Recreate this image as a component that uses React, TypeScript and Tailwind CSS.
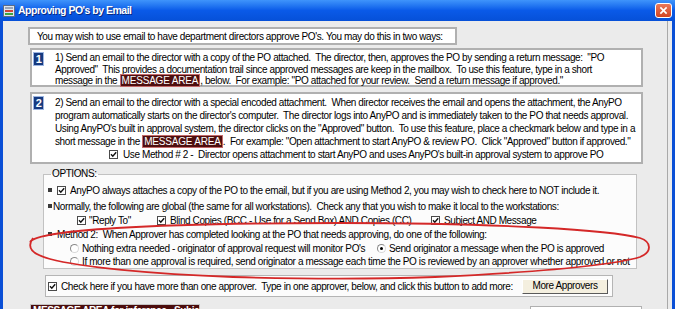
import type { ReactNode } from 'react';

function Check({ checked = true }: { checked?: boolean }) {
  return (
    <span className="inline-flex w-[9px] h-[9px] shrink-0 items-center justify-center bg-white border border-[#4a4a4a]">
      {checked && (
        <svg viewBox="0 0 7 7" className="w-[7px] h-[7px]">
          <path d="M1 3.2 L2.8 5.2 L6.2 1.2" fill="none" stroke="#111" strokeWidth="1.4" />
        </svg>
      )}
    </span>
  );
}

function Radio({ on = false }: { on?: boolean }) {
  return (
    <span className="inline-flex w-[9px] h-[9px] shrink-0 items-center justify-center rounded-full bg-white border border-t-[#8a8a8a] border-l-[#8a8a8a] border-r-[#d8d8d8] border-b-[#d8d8d8]">
      {on && <span className="w-[3px] h-[3px] rounded-full bg-black" />}
    </span>
  );
}

function Bullet() {
  return <span className="w-[4px] h-[4px] shrink-0 bg-[#3a3a3a]" />;
}

function MsgArea() {
  return (
    <span className="bg-[#4e0f0f] text-white border border-[#c46a6a] px-[1px] tracking-[-0.2px]">MESSAGE AREA</span>
  );
}

function Badge({ n }: { n: string }) {
  return (
    <span className="w-[11px] h-[14px] shrink-0 flex items-center justify-center bg-[#163a80] border border-[#9db6e2] text-white font-bold text-[11px] leading-none">
      {n}
    </span>
  );
}

function Row({ children, className = '' }: { children: ReactNode; className?: string }) {
  return <div className={`flex items-center h-[14px] whitespace-nowrap ${className}`}>{children}</div>;
}

export default function App() {
  return (
    <div className="w-[675px] h-[309px] overflow-hidden relative flex flex-col bg-[#0a4fd6] font-['Liberation_Sans',Arial,sans-serif] text-[10px] tracking-[-0.4px] text-black">
      {/* title bar */}
      <div className="h-[21px] shrink-0 flex items-center bg-linear-to-b from-[#3f94fb] via-[#0a5ae8] to-[#0650d8]">
        <svg viewBox="0 0 12 12" className="ml-[3px] w-[12px] h-[12px]">
          <rect x="0.5" y="0.5" width="11" height="11" fill="#dfe6ee" stroke="#5c6d88" />
          <rect x="2" y="2" width="8" height="2" fill="#9aa6b8" />
          <rect x="2" y="5" width="8" height="2" fill="#d0463a" />
          <rect x="2" y="8" width="8" height="2" fill="#3fa640" />
        </svg>
        <span className="ml-[3px] text-white font-bold text-[10.5px] tracking-[-0.5px] [text-shadow:1px_1px_0_#0a2a80]">
          Approving PO's by Email
        </span>
        <div className="ml-auto mr-[3px] w-[17px] h-[15px] rounded-[3px] border border-white bg-linear-to-b from-[#e9785a] to-[#d2431f] flex items-center justify-center">
          <svg viewBox="0 0 10 10" className="w-[9px] h-[9px]">
            <path d="M1.5 1.5 L8.5 8.5 M8.5 1.5 L1.5 8.5" stroke="#fff" strokeWidth="1.8" />
          </svg>
        </div>
      </div>

      {/* body */}
      <div className="flex-1 mx-[3px] flex bg-[#ebebeb]">
        <div className="flex-1 border-r border-[#a9a9a9] pl-[25px] pt-[6px] flex flex-col">
          {/* intro */}
          <div className="w-[429px] h-[18px] bg-white border-2 border-[#b0b0b0] flex items-center pl-[7px] whitespace-nowrap">
            You may wish to use email to have department directors approve PO's. You may do this in two ways:
          </div>

          {/* method 1 */}
          <div className="ml-[2px] mt-[3px] w-[613px] h-[39px] bg-white border-2 border-[#b0b0b0] flex pt-[2px] pl-[1px]">
            <Badge n="1" />
            <div className="ml-[11px] leading-[11.5px] whitespace-nowrap">
              1) Send an email to the director with a copy of the PO attached.&nbsp; The director, then, approves the PO by sending a return message:&nbsp; "PO
              <br />
              Approved"&nbsp; This provides a documentation trail since approved messages are keep in the mailbox.&nbsp; To use this feature, type in a short
              <br />
              message in the <MsgArea />, below.&nbsp; For example: "PO attached for your review.&nbsp; Send a return message if approved."
            </div>
          </div>

          {/* method 2 */}
          <div className="ml-[2px] mt-[5px] w-[613px] h-[72px] bg-white border-2 border-[#b0b0b0] flex pt-[2px] pl-[1px]">
            <Badge n="2" />
            <div className="ml-[11px] leading-[13px] whitespace-nowrap">
              2) Send an email to the director with a special encoded attachment.&nbsp; When director receives the email and opens the attachment, the AnyPO
              <br />
              program automatically starts on the director's computer.&nbsp; The director logs into AnyPO and is immediately taken to the PO that needs approval.
              <br />
              Using AnyPO's built in approval system, the director clicks on the "Approved" button.&nbsp; To use this feature, place a checkmark below and type in a
              <br />
              short message in the <MsgArea />.&nbsp; For example: "Open attachment to start AnyPO &amp; review PO.&nbsp; Click "Approved" button if approved."
              <div className="flex items-center h-[13px] ml-[54px]">
                <Check />
                <span className="ml-[5px]">Use Method # 2 -&nbsp; Director opens attachment to start AnyPO and uses AnyPO's built-in approval system to approve PO</span>
              </div>
            </div>
          </div>

          {/* options */}
          <fieldset className="ml-[15px] mt-[4px] w-[594px] h-[101px] bg-[#fcfcfc] border border-[#c2c2c2] pl-[4px]">
            <legend className="ml-[3px] px-[1px] leading-[12px]">OPTIONS:</legend>
            <Row className="mt-[3px]">
              <Bullet />
              <span className="ml-[5px]"><Check /></span>
              <span className="ml-[4px]">AnyPO always attaches a copy of the PO to the email, but if you are using Method 2, you may wish to check here to NOT include it.</span>
            </Row>
            <Row className="mt-[2px]">
              <Bullet />
              <span className="ml-[1px]">Normally, the following are global (the same for all workstations).&nbsp; Check any that you wish to make it local to the workstations:</span>
            </Row>
            <Row>
              <div className="ml-[29px] w-[80px] flex items-center">
                <Check />
                <span className="ml-[3px]">"Reply To"</span>
              </div>
              <div className="w-[274px] flex items-center">
                <Check />
                <span className="ml-[4px]">Blind Copies (BCC - Use for a Send Box) AND Copies (CC)</span>
              </div>
              <Check />
              <span className="ml-[4px]">Subject AND Message</span>
            </Row>
            <Row>
              <Bullet />
              <span className="ml-[5px]">Method 2:&nbsp; When Approver has completed looking at the PO that needs approving, do one of the following:</span>
            </Row>
            <Row>
              <div className="ml-[22px] w-[307px] flex items-center">
                <Radio />
                <span className="ml-[3px]">Nothing extra needed - originator of approval request will monitor PO's</span>
              </div>
              <Radio on />
              <span className="ml-[3px]">Send originator a message when the PO is approved</span>
            </Row>
            <Row className="-mt-[1px]">
              <div className="ml-[22px] flex items-center">
                <Radio />
                <span className="ml-[3px]">If more than one approval is required, send originator a message each time the PO is reviewed by an approver whether approved or not</span>
              </div>
            </Row>
          </fieldset>

          {/* more approvers */}
          <div className="ml-[17px] mt-[6px] w-[568px] h-[22px] bg-[#fcfcfc] border border-[#b5b5b5] flex items-center pl-[2px] whitespace-nowrap">
            <Check />
            <span className="ml-[4px]">Check here if you have more than one approver.&nbsp; Type in one approver, below, and click this button to add more:</span>
            <button className="ml-auto mr-[4px] w-[86px] h-[15px] bg-[#f4efdf] border border-t-white border-l-white border-r-[#5a5a5a] border-b-[#5a5a5a] text-[10px] leading-none">
              More Approvers
            </button>
          </div>

          {/* bottom */}
          <div className="mt-[7px] flex items-start">
            <div className="ml-[2px] w-[170px] h-[12px] bg-[#4b0c0c] border border-[#c4c4c4] text-white font-bold pl-[2px] leading-[12px] whitespace-nowrap overflow-hidden">
              MESSAGE AREA for inference - Subject
            </div>
            <div className="ml-[330px] mt-[2px] w-[112px] h-[10px] bg-white border border-[#b0b0b0]" />
          </div>
        </div>
        <div className="w-[4px]" />
      </div>

      {/* red ellipse annotation */}
      <svg viewBox="0 0 675 309" className="absolute inset-0 w-[675px] h-[309px] pointer-events-none">
        <path
          d="M30 242 C38 230 150 223 340 223 C500 223 610 230 640 238 C652 242 652 252 640 257 C610 266 540 272 435 277 C380 279 300 279 233 277 C150 274 80 267 50 259 C32 254 26 248 33 238"
          fill="none"
          stroke="#d42828"
          strokeWidth="1.8"
        />
      </svg>
    </div>
  );
}
